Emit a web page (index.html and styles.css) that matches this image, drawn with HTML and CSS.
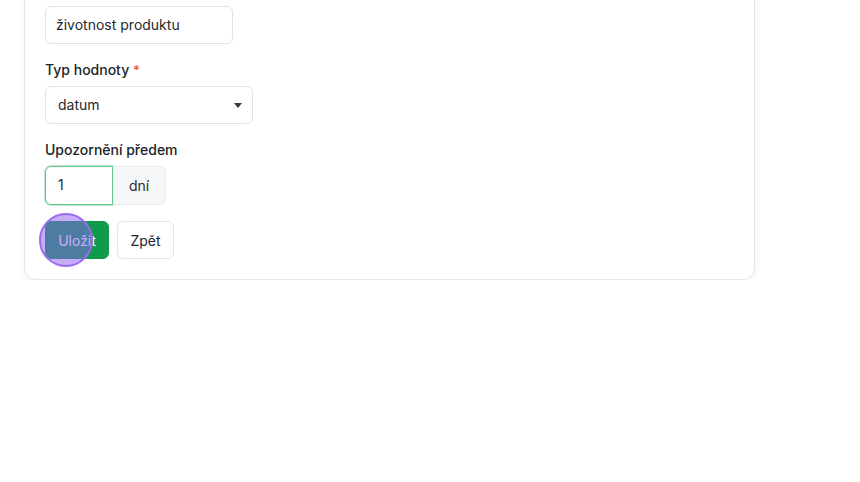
FILE: index.html
```html
<!DOCTYPE html>
<html lang="cs">
<head>
  <meta charset="UTF-8">
  <meta name="viewport" content="width=device-width, initial-scale=1.0">
  <title>Parametr produktu</title>
  <link rel="stylesheet" href="styles.css">
</head>
<body>
  <div class="card">
    <div class="field">
      <div class="input name-input">životnost produktu</div>
    </div>

    <div class="field">
      <label class="label">Typ hodnoty <span class="req">*</span></label>
      <div class="input select">
        <span>datum</span>
        <span class="caret"></span>
      </div>
    </div>

    <div class="field">
      <label class="label">Upozornění předem</label>
      <div class="input-group">
        <div class="input focus">1</div>
        <div class="addon">dní</div>
      </div>
    </div>

    <div class="actions">
      <button class="btn btn-save">Uložit</button>
      <button class="btn btn-back">Zpět</button>
      <span class="click-dot"></span>
    </div>
  </div>
</body>
</html>
```

FILE: styles.css
```css
* {
  box-sizing: border-box;
}

body {
  margin: 0;
  background: #ffffff;
  font-family: 'Inter', 'Noto Sans', 'Liberation Sans', sans-serif;
  font-size: 14px;
  color: #262a2e;
}

.card {
  width: 731px;
  margin: -17px 0 0 24px;
  padding: 22px 20px 20px 20px;
  background: #fff;
  border: 1px solid #e6e6e6;
  border-radius: 12px;
  box-shadow: 0 2px 8px rgba(0,0,0,0.05);
}

.field {
  margin-bottom: 16px;
}

.label {
  display: block;
  height: 20px;
  line-height: 20px;
  margin-bottom: 6px;
  font-weight: 500;
  color: #212529;
}

.req {
  color: #e0561c;
  font-size: 13px;
}

.input {
  height: 38px;
  line-height: 36px;
  padding: 0 12px;
  border: 1px solid #dfe2e6;
  border-radius: 6px;
  background: #fff;
}

.name-input {
  width: 188px;
  padding-left: 10px;
}

.select {
  width: 208px;
  display: flex;
  justify-content: space-between;
  align-items: center;
}

.caret {
  width: 0;
  height: 0;
  border-left: 4px solid transparent;
  border-right: 4px solid transparent;
  border-top: 5px solid #343a40;
  margin-right: -2px;
}

.input-group {
  display: flex;
  height: 39px;
}

.input-group .input {
  width: 68px;
  height: 39px;
  border-radius: 6px 0 0 6px;
}

.input.focus {
  border-color: #5fc88a;
  box-shadow: 0 0 0 1px rgba(25,160,84,0.25);
}

.addon {
  width: 53px;
  line-height: 37px;
  text-align: center;
  background: #f6f7f8;
  border: 1px solid #e9ecef;
  border-left: none;
  border-radius: 0 6px 6px 0;
}

.actions {
  position: relative;
  display: flex;
  gap: 8px;
}

.btn {
  height: 38px;
  padding: 0 12px;
  font-family: inherit;
  font-size: 14px;
  font-weight: 400;
  border-radius: 6px;
  cursor: pointer;
}

.btn-save {
  width: 64px;
  background: #109a4c;
  border: 1px solid #109a4c;
  color: #fff;
}

.btn-back {
  width: 57px;
  background: #fff;
  border: 1px solid #e2e5e8;
  color: #212529;
}

/* indikátor kliknutí */
.click-dot {
  position: absolute;
  left: -6px;
  top: -8px;
  width: 54px;
  height: 54px;
  border-radius: 50%;
  background: rgba(139, 92, 246, 0.5);
  border: 2px solid #9b6cf0;
}
```
